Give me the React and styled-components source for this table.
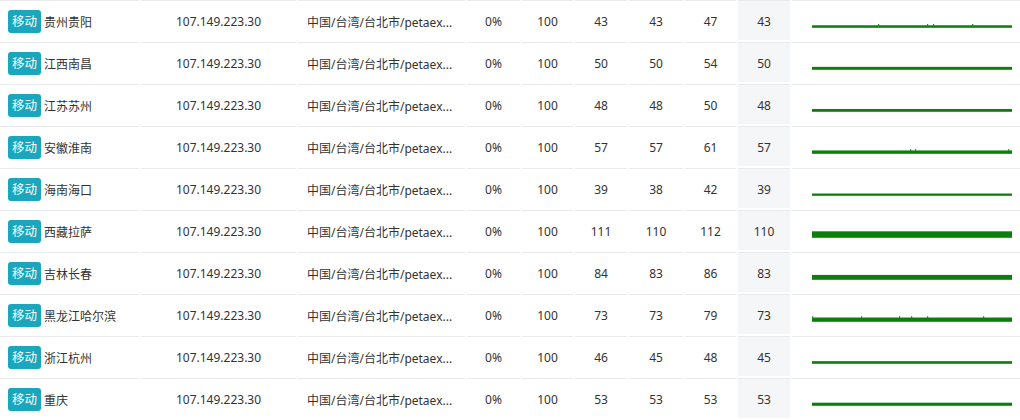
import React from "react";
import styled, { createGlobalStyle } from "styled-components";

const Global = createGlobalStyle`
  html, body {
    margin: 0;
    padding: 0;
    background: #fff;
  }
  body {
    font-family: "Noto Sans", "Noto Sans CJK SC", sans-serif;
    font-size: 12px;
    color: #333;
  }
`;

const Table = styled.div`
  width: 1020px;
  overflow: hidden;
`;

const Row = styled.div`
  display: grid;
  grid-template-columns: 139px 155px 167px 53px 51px 52px 54px 51px 52px 1fr;
  column-gap: 2px;
  height: 42px;
`;

const Cell = styled.div`
  border-top: 1px solid #e8eaec;
  display: flex;
  align-items: center;
  justify-content: ${(p) => (p.$left ? "flex-start" : "center")};
  padding: ${(p) => (p.$left ? `0 0 0 ${p.$left}px` : "0")};
  min-width: 0;
  white-space: nowrap;
  background: ${(p) =>
    p.$shade
      ? "linear-gradient(#f5f6f8, #f5f6f8) top / 100% calc(100% - 2px) no-repeat"
      : "none"};
`;

const Tag = styled.span`
  display: inline-block;
  background: #1aa6bd;
  color: #fff;
  border-radius: 3px;
  padding: 0 4px;
  height: 23px;
  line-height: 23px;
  font-size: 12.5px;
  margin-right: 3px;
`;

const ChartCell = styled.div`
  border-top: 1px solid #e8eaec;
  height: 41px;
`;

const rows = [
  { city: "贵州贵阳", v: [43, 43, 47, 43], spikes: [86, 135, 141, 180] },
  { city: "江西南昌", v: [50, 50, 54, 50], spikes: [] },
  { city: "江苏苏州", v: [48, 48, 50, 48], spikes: [] },
  { city: "安徽淮南", v: [57, 57, 61, 57], spikes: [118, 123, 216] },
  { city: "海南海口", v: [39, 38, 42, 39], spikes: [] },
  { city: "西藏拉萨", v: [111, 110, 112, 110], spikes: [] },
  { city: "吉林长春", v: [84, 83, 86, 83], spikes: [] },
  { city: "黑龙江哈尔滨", v: [73, 73, 79, 73], spikes: [20, 69, 107, 119, 135, 191] },
  { city: "浙江杭州", v: [46, 45, 48, 45], spikes: [] },
  { city: "重庆", v: [53, 53, 53, 53], spikes: [] },
];

const Spark = ({ value, spikes }) => {
  const h = value / 17;
  const base = 26.8;
  return (
    <svg width="228" height="41" viewBox="0 0 228 41">
      <rect x="20" y={base - h} width="200" height={h} fill="#0a7f0a" />
      {spikes.map((x) => (
        <rect key={x} x={x} y={base - h - 1.2} width="1.2" height="1.5" fill="#0a7f0a" />
      ))}
    </svg>
  );
};

export default function App() {
  return (
    <>
      <Global />
      <Table>
        {rows.map((r) => (
          <Row key={r.city}>
            <Cell $left={8}>
              <Tag>移动</Tag>
              {r.city}
            </Cell>
            <Cell>107.149.223.30</Cell>
            <Cell $left={9}>中国/台湾/台北市/petaex...</Cell>
            <Cell>0%</Cell>
            <Cell>100</Cell>
            <Cell>{r.v[0]}</Cell>
            <Cell>{r.v[1]}</Cell>
            <Cell>{r.v[2]}</Cell>
            <Cell $shade>{r.v[3]}</Cell>
            <ChartCell>
              <Spark value={r.v[3]} spikes={r.spikes} />
            </ChartCell>
          </Row>
        ))}
      </Table>
    </>
  );
}
